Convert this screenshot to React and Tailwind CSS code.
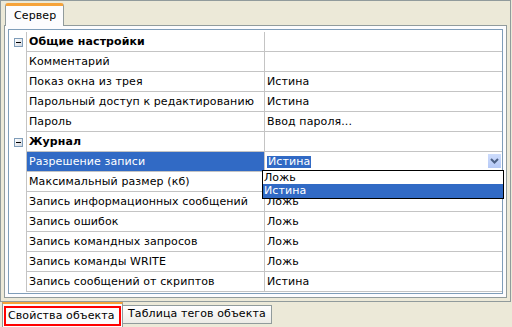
import React from "react";

const rows = [
  { cat: true, label: "Общие настройки" },
  { label: "Комментарий", value: "" },
  { label: "Показ окна из трея", value: "Истина" },
  { label: "Парольный доступ к редактированию", value: "Истина" },
  { label: "Пароль", value: "Ввод пароля..." },
  { cat: true, label: "Журнал" },
  { label: "Разрешение записи", value: "Истина", selected: true },
  { label: "Максимальный размер (кб)", value: "" },
  { label: "Запись информационных сообщений", value: "Ложь" },
  { label: "Запись ошибок", value: "Ложь" },
  { label: "Запись командных запросов", value: "Ложь" },
  { label: "Запись команды WRITE", value: "Ложь" },
  { label: "Запись сообщений от скриптов", value: "Истина" },
];

function MinusBox() {
  return (
    <div className="w-[9px] h-[9px] border border-[#7f9db9] bg-gradient-to-br from-white to-[#d4d8e0] flex items-center justify-center">
      <div className="w-[5px] h-px bg-black" />
    </div>
  );
}

function Row({ row }) {
  return (
    <div className="flex h-[20px]">
      <div className="w-[17px] shrink-0 flex items-center justify-center pl-[1px]">
        {row.cat && <MinusBox />}
      </div>
      <div
        className={`w-[238px] shrink-0 border-l border-b border-[#c4c4c4] pl-[2px] pt-px flex items-center whitespace-nowrap overflow-hidden ${
          row.cat ? "font-bold" : ""
        } ${row.selected ? "bg-[#316ac5] text-white" : ""}`}
      >
        {row.label}
      </div>
      <div className="relative flex-1 border-l border-b border-[#c4c4c4] pl-[2px] pt-px flex items-center whitespace-nowrap">
        {row.selected ? (
          <>
            <span className="bg-[#316ac5] text-white px-px leading-[12px]">{row.value}</span>
            <div className="absolute right-[1px] top-[2px] w-[13px] h-[14px] bg-gradient-to-b from-[#cddcfc] to-[#b6c9f6] flex items-center justify-center">
              <svg width="9" height="6" viewBox="0 0 9 6">
                <polyline points="1,1 4.5,4.5 8,1" fill="none" stroke="#4d6185" strokeWidth="2" />
              </svg>
            </div>
            <div className="absolute left-[-3px] top-[18px] w-[242px] border border-black bg-white z-10 flex flex-col">
              <div className="h-[13px] leading-[13px] pl-[1px]">Ложь</div>
              <div className="h-[14px] leading-[14px] pl-[1px] bg-[#316ac5] text-white">Истина</div>
            </div>
          </>
        ) : (
          row.value
        )}
      </div>
    </div>
  );
}

export default function App() {
  return (
    <div className="w-[512px] h-[327px] bg-[#ece9d8] overflow-hidden text-[11px] tracking-[0.1px] text-black font-['DejaVu_Sans',sans-serif] flex flex-col">
      <div className="w-[511px] h-[302px] shrink-0 border border-[#919b9c] pt-[2px] px-[3px] pb-[3px] flex flex-col">
        <div className="h-[22px] flex items-end shrink-0">
          <div className="relative z-10 -mb-px h-[23px] w-[59px] ml-[1px] bg-[#fcfcfe] border-x border-[#919b9c] rounded-t-[3px] border-t-[3px] border-t-[#f6a33a] flex items-center pl-[8px]">
            Сервер
          </div>
        </div>
        <div className="flex-1 border border-[#919b9c] bg-[#fcfcfe] p-[3px] flex">
          <div className="flex-1 border border-[#7f9db9] bg-white pt-[2px] flex flex-col">
            {rows.map((r, i) => (
              <Row key={i} row={r} />
            ))}
          </div>
        </div>
      </div>
      <div className="flex items-start h-[25px] shrink-0">
        <div className="w-[121px] h-[25px] ml-[2px] border-t-[2px] border-t-[#f6a33a] border-x border-[#919b9c] bg-[#fcfcfe] pt-[2px] px-[1px]">
          <div className="h-[20px] border-2 border-[#ff0000] flex items-center pl-[2px]">Свойства объекта</div>
        </div>
        <div className="mt-[3px] h-[19px] w-[149px] border border-l-0 border-[#919b9c] bg-gradient-to-b from-white to-[#ecebe6] flex items-center pl-[5px]">
          Таблица тегов объекта
        </div>
      </div>
    </div>
  );
}
